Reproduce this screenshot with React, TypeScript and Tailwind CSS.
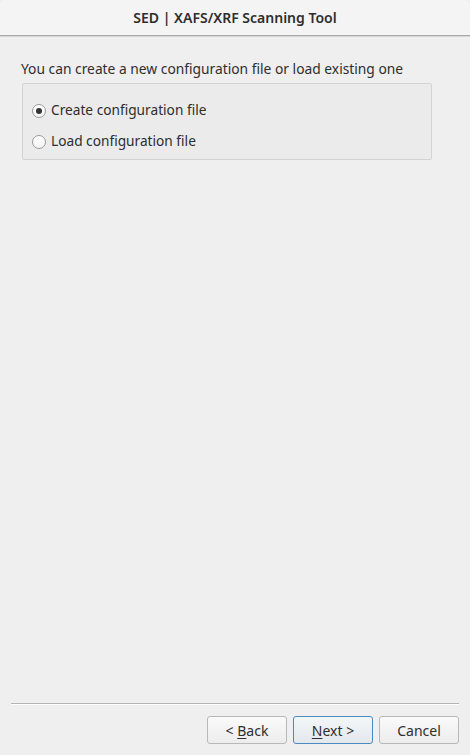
import React, { useState } from "react";

const font = { fontFamily: '"Noto Sans", "Open Sans", sans-serif' };

const Radio: React.FC<{ checked: boolean; label: string; onSelect: () => void }> = ({ checked, label, onSelect }) => (
  <label className="flex items-center h-[31px] cursor-default" onClick={onSelect}>
    <span className="w-[14px] h-[14px] rounded-full border border-[#9a9a9a] bg-gradient-to-b from-white to-[#f3f3f3] flex items-center justify-center">
      {checked && <span className="w-[6px] h-[6px] rounded-full bg-[#333]" />}
    </span>
    <span className="ml-[5px] text-[13.7px] text-[#2e2e2e]">{label}</span>
  </label>
);

const Btn: React.FC<{ children: React.ReactNode; primary?: boolean }> = ({ children, primary }) => (
  <button
    className={
      "w-[80px] h-[28px] rounded-[3px] text-[14px] text-[#2e2e2e] border " +
      (primary
        ? "border-[#4a8ac2] bg-gradient-to-b from-[#f4f6f8] to-[#e3e8ed]"
        : "border-[#b8b8b8] bg-gradient-to-b from-[#fafafa] to-[#ececec]")
    }
  >
    {children}
  </button>
);

const App: React.FC = () => {
  const [mode, setMode] = useState<"create" | "load">("create");

  return (
    <div className="w-[470px] h-[755px] bg-[#efefef] flex flex-col overflow-hidden" style={font}>
      <div className="h-[36px] shrink-0 bg-[#f4f4f4] rounded-t-[6px] border-b border-[#a9a9a9] flex items-center justify-center">
        <span className="text-[14px] text-[#2e2e2e] font-semibold">SED | XAFS/XRF Scanning Tool</span>
      </div>
      <div className="h-px bg-[#d6d6d6]" />

      <div className="flex-1 px-[21px] pt-[22px]">
        <p className="text-[13.8px] text-[#2e2e2e] leading-[20px]">You can create a new configuration file or load existing one</p>
        <div className="mt-[4px] ml-px w-[410px] h-[77px] border border-[#d3d3d3] rounded-[2px] bg-[#ebebeb] pl-[9px] pt-[11px]">
          <Radio checked={mode === "create"} label="Create configuration file" onSelect={() => setMode("create")} />
          <Radio checked={mode === "load"} label="Load configuration file" onSelect={() => setMode("load")} />
        </div>
      </div>

      <div className="mx-[11px] border-t border-[#b4b4b4] border-b border-b-white" />
      <div className="h-[50px] shrink-0 flex justify-end items-start gap-[6px] pr-[11px] pt-[11px]">
        <Btn>
          &lt; <span className="underline underline-offset-2">B</span>ack
        </Btn>
        <Btn primary>
          <span className="underline underline-offset-2">N</span>ext &gt;
        </Btn>
        <Btn>Cancel</Btn>
      </div>
    </div>
  );
};

export default App;
